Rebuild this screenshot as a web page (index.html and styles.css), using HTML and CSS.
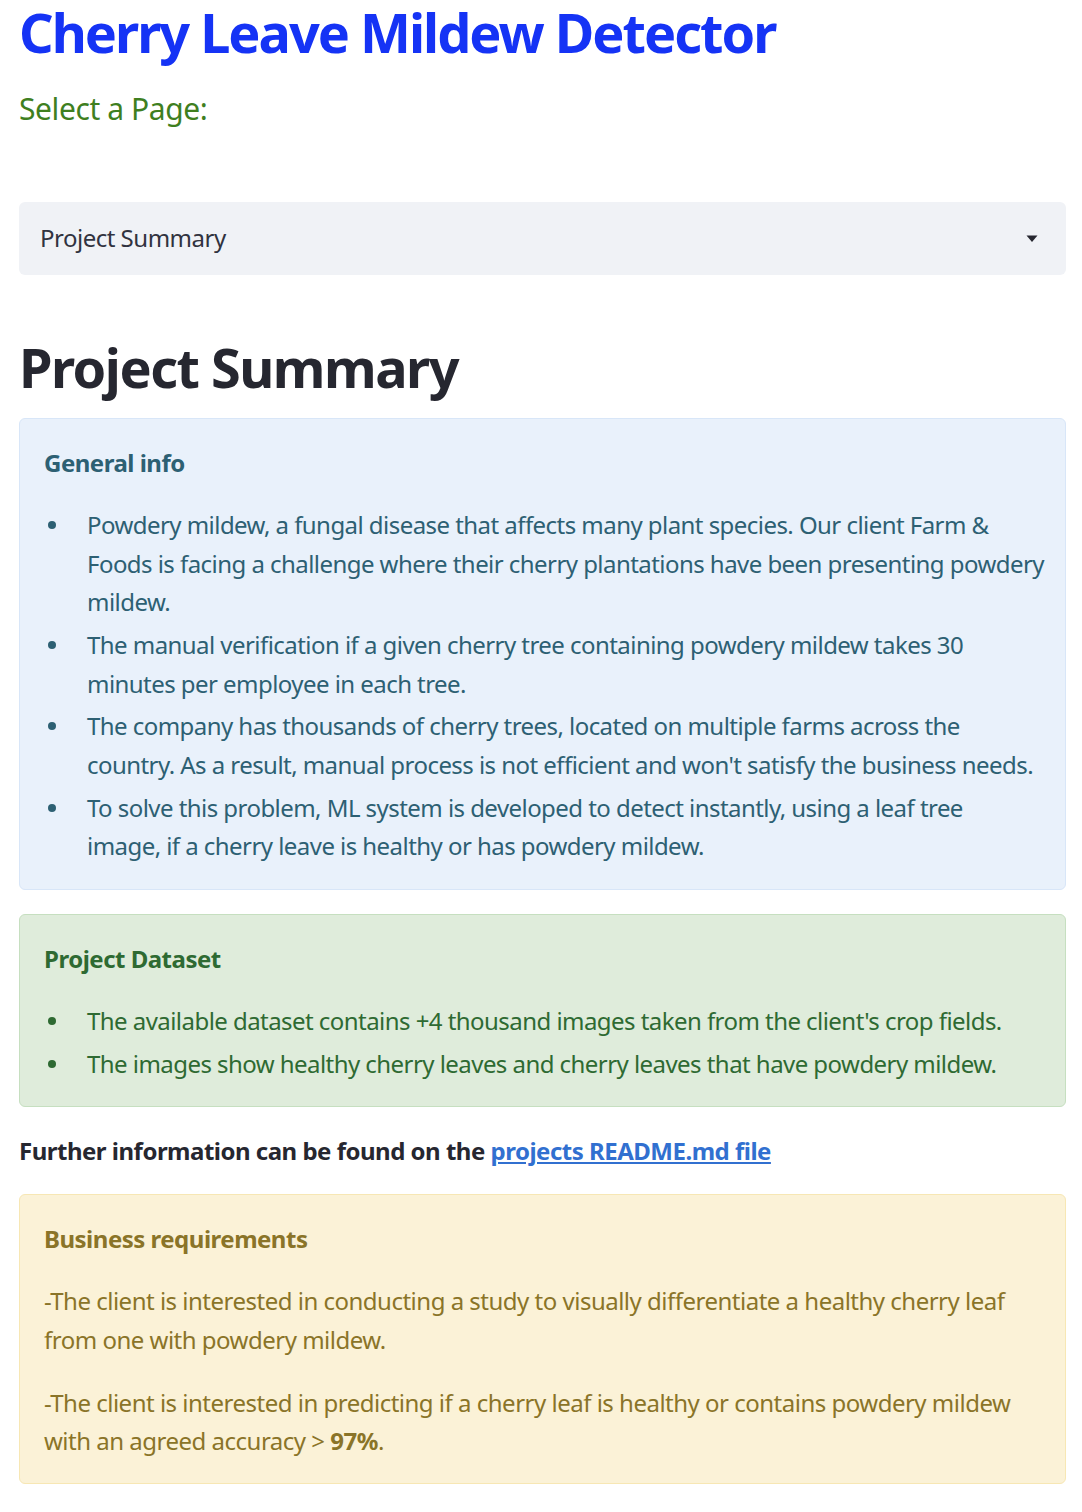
FILE: index.html
```html
<!DOCTYPE html>
<html lang="en">
<head>
<meta charset="utf-8">
<title>Cherry Leave Mildew Detector</title>
<link rel="stylesheet" href="styles.css">
</head>
<body>
<main class="page">
  <h1 class="app-title">Cherry Leave Mildew Detector</h1>
  <p class="select-label">Select a Page:</p>
  <div class="select">
    <span class="select-value">Project Summary</span>
    <svg class="caret" width="12" height="8" viewBox="0 0 12 8"><path d="M0.5 0.5 H11.5 L6 7 Z" fill="#262730"/></svg>
  </div>

  <h1 class="page-title">Project Summary</h1>

  <section class="alert alert-info">
    <p class="alert-head">General info</p>
    <ul class="alert-list">
      <li>Powdery mildew, a fungal disease that affects many plant species. Our client Farm &amp; Foods is facing a challenge where their cherry plantations have been presenting powdery mildew.</li>
      <li>The manual verification if a given cherry tree containing powdery mildew takes 30 minutes per employee in each tree.</li>
      <li>The company has thousands of cherry trees, located on multiple farms across the country. As a result, manual process is not efficient and won't satisfy the business needs.</li>
      <li>To solve this problem, ML system is developed to detect instantly, using a leaf tree<br>image, if a cherry leave is healthy or has powdery mildew.</li>
    </ul>
  </section>

  <section class="alert alert-success">
    <p class="alert-head">Project Dataset</p>
    <ul class="alert-list">
      <li>The available dataset contains +4 thousand images taken from the client's crop fields.</li>
      <li>The images show healthy cherry leaves and cherry leaves that have powdery mildew.</li>
    </ul>
  </section>

  <p class="further">Further information can be found on the <a href="#" class="link">projects README.md file</a></p>

  <section class="alert alert-warning">
    <p class="alert-head">Business requirements</p>
    <p class="alert-para">-The client is interested in conducting a study to visually differentiate a healthy cherry leaf from one with powdery mildew.</p>
    <p class="alert-para">-The client is interested in predicting if a cherry leaf is healthy or contains powdery mildew with an agreed accuracy &gt; <strong>97%</strong>.</p>
  </section>
</main>
</body>
</html>
```
FILE: styles.css
```css
* { box-sizing: border-box; }
html, body { margin: 0; padding: 0; background: #ffffff; }
body {
  font-family: "Noto Sans", "Open Sans", sans-serif;
  font-size: 24px;
  line-height: 38.4px;
  letter-spacing: -0.5px;
  color: #262730;
}
.page {
  padding: 0 16px 30px 19px;
}
.app-title {
  margin: 0;
  font-size: 54px;
  line-height: 64px;
  font-weight: 700;
  color: #1533f5;
  letter-spacing: -2px;
}
.select-label {
  margin: 25px 0 0;
  font-size: 30px;
  line-height: 40px;
  letter-spacing: -0.4px;
  color: #3f7f1f;
}
.select {
  margin-top: 73px;
  height: 73px;
  background: #f0f2f6;
  border-radius: 6px;
  display: flex;
  align-items: center;
  justify-content: space-between;
  padding: 0 28px 0 21px;
}
.select-value {
  font-size: 24px;
  color: #31333f;
}
.caret { display: block; }
.page-title {
  margin: 56px 0 0;
  font-size: 54px;
  line-height: 72px;
  font-weight: 700;
  letter-spacing: -1.5px;
  color: #262730;
}
.alert {
  border-radius: 6px;
  border: 1px solid;
  padding: 25px 12px 23px 24px;
}
.alert-head {
  margin: 0 0 24px;
  font-weight: 700;
}
.alert-list {
  margin: 0;
  padding-left: 43px;
  list-style: none;
  letter-spacing: -0.55px;
}
.alert-list li {
  position: relative;
  margin-bottom: 4.5px;
}
.alert-list li:last-child { margin-bottom: 0; }
.alert-list li::before {
  content: "";
  position: absolute;
  left: -39px;
  top: 15px;
  width: 8px;
  height: 8px;
  border-radius: 50%;
  background: currentColor;
}
.alert-info {
  margin-top: 15px;
  background: #e9f1fb;
  border-color: #d8e6f8;
  color: #2d6073;
}
.alert-success {
  margin-top: 24px;
  background: #dfecdb;
  border-color: #c6dfc0;
  color: #2e6a32;
}
.alert-warning {
  margin-top: 23px;
  background: #fbf2d7;
  border-color: #f7e7b4;
  color: #8a7428;
}
.alert-para { margin: 0 0 24.6px; }
.alert-para:last-child { margin-bottom: 0; }
.further {
  margin: 25px 0 0;
  font-weight: 700;
}
.link {
  color: #3170d0;
  text-decoration: underline;
}
```
